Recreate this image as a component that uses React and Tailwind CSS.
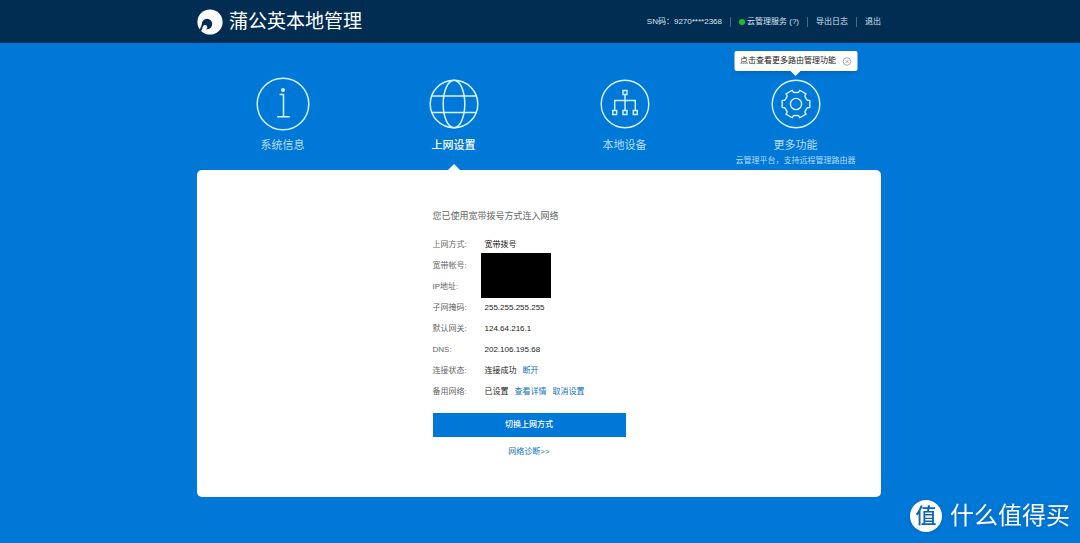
import React, { useState } from 'react';

const InfoIcon = () => (
    <svg className="w-[54px] h-[54px]" viewBox="0 0 54 54" fill="none" stroke="currentColor" strokeWidth="1.5">
        <circle cx="27" cy="27" r="25.8" />
        <circle cx="27" cy="13" r="2" fill="currentColor" stroke="none" />
        <path d="M23.5 17.5h4v22.3M21.2 39.8h12.6" />
    </svg>
);

const GlobeIcon = () => (
    <svg className="w-[50px] h-[50px]" viewBox="0 0 50 50" fill="none" stroke="currentColor" strokeWidth="1.5">
        <circle cx="25" cy="25" r="23.8" />
        <ellipse cx="25" cy="25" rx="10.8" ry="23.8" />
        <path d="M2.6 17h44.8M2.6 33.5h44.8" />
    </svg>
);

const DevicesIcon = () => (
    <svg className="w-[50px] h-[50px]" viewBox="0 0 50 50" fill="none" stroke="currentColor" strokeWidth="1.4">
        <circle cx="25" cy="25" r="23.8" />
        <path d="M23 11.5h4v4h-4zM12.7 31.5h4v4h-4zM23 31.5h4v4h-4zM33.3 31.5h4v4h-4z" />
        <path d="M25 15.5v16M14.7 31.5v-10h20.6v10" />
    </svg>
);

// Seis dientes repartidos cada 60 grados
const gearPoints = [0, 60, 120, 180, 240, 300]
    .flatMap(deg => {
        const a = (deg * Math.PI) / 180;
        return [[10.6, -4.6], [11.4, -3.6], [13.8, -3.6], [13.8, 3.6], [11.4, 3.6], [10.6, 4.6]].map(
            ([x, y]) => `${(25 + x * Math.cos(a) - y * Math.sin(a)).toFixed(2)},${(25 + x * Math.sin(a) + y * Math.cos(a)).toFixed(2)}`
        );
    })
    .join(' ');

const GearIcon = () => (
    <svg className="w-[50px] h-[50px]" viewBox="0 0 50 50" fill="none" stroke="currentColor" strokeWidth="1.4" strokeLinejoin="round">
        <circle cx="25" cy="25" r="23.8" />
        <circle cx="25" cy="25" r="5.6" />
        <polygon points={gearPoints} />
    </svg>
);

const Logo = () => (
    <svg className="w-[26px] h-[26px]" viewBox="0 0 26 26">
        <circle cx="13" cy="13" r="12.6" fill="#fff" />
        <circle cx="10" cy="15" r="5.2" fill="#022d53" />
        <path d="M5.8 15.5C5 18 4.4 19.5 3 22" fill="none" stroke="#022d53" strokeWidth="2" />
        <circle cx="8" cy="18.2" r="2.2" fill="#fff" />
    </svg>
);

const TABS = [
    { id: 'info', label: '系统信息', icon: <InfoIcon /> },
    { id: 'network', label: '上网设置', icon: <GlobeIcon /> },
    { id: 'devices', label: '本地设备', icon: <DevicesIcon /> },
    { id: 'more', label: '更多功能', icon: <GearIcon />, note: '云管理平台，支持远程管理路由器' },
];

const linkClass = 'text-[#0f70bd] hover:underline';

const Header = () => (
    <header className="bg-[#022d53] pr-0.5">
        <div className="max-w-[684px] h-[43px] mx-auto flex items-center justify-between">
            <div className="flex items-center gap-1.5 text-white">
                <Logo />
                <h1 className="text-[19px] leading-6 whitespace-nowrap">蒲公英本地管理</h1>
            </div>
            <nav className="flex items-center text-[8px] leading-[10px] text-[#d3e2ee] whitespace-nowrap divide-x divide-[#4a6a86]">
                <span className="pr-2">SN码：9270****2368</span>
                <a href="#cloud" className="flex items-center gap-0.5 px-2">
                    <span className="w-1.5 h-1.5 rounded-full bg-[#16c02c]"></span>
                    云管理服务 (?)
                </a>
                <a href="#log" className="px-2">导出日志</a>
                <a href="#logout" className="pl-2">退出</a>
            </nav>
        </div>
    </header>
);

const Tooltip = ({ onClose }) => (
    <div className="absolute z-10 top-[8px] left-1/2 -translate-x-1/2 h-5 px-1.5 flex items-center gap-1.5 bg-white rounded-xs shadow-md text-[8px] text-[#222] whitespace-nowrap">
        点击查看更多路由管理功能
        <button type="button" aria-label="关闭" onClick={onClose} className="text-[#aaa]">
            <svg className="w-[9px] h-[9px]" viewBox="0 0 9 9" fill="none" stroke="currentColor">
                <circle cx="4.5" cy="4.5" r="3.8" />
                <path d="M3 3l3 3M6 3L3 6" />
            </svg>
        </button>
        <span className="absolute top-full left-1/2 -translate-x-1/2 border-x-[5px] border-t-[5px] border-x-transparent border-t-white"></span>
    </div>
);

const App = () => {
    const [active, setActive] = useState('network');
    const [showTip, setShowTip] = useState(true);

    return (
        <div className="min-h-screen bg-[#0078d8] font-['Liberation_Sans','Noto_Sans_CJK_SC',sans-serif]">
            <Header />

            <main className="pr-0.5 pb-11">
                <div className="max-w-[684px] mx-auto">
                    <div className="grid grid-cols-4 h-[127px]">
                        {TABS.map(tab => (
                            <div key={tab.id} className="relative">
                                {tab.id === 'more' && showTip && <Tooltip onClose={() => setShowTip(false)} />}
                                <button
                                    type="button"
                                    onClick={() => setActive(tab.id)}
                                    className={`w-full h-full pt-[34px] flex flex-col items-center ${active === tab.id ? 'text-white' : 'text-[#b5dcf8]'}`}
                                >
                                    <span className="h-[54px] flex items-center text-[#d8f4ff]">{tab.icon}</span>
                                    <span className={`mt-1.5 text-[11px] leading-[17px] ${active === tab.id ? 'font-medium' : ''}`}>{tab.label}</span>
                                    {tab.note && <span className="text-[8px] leading-[14px] whitespace-nowrap">{tab.note}</span>}
                                </button>
                                {active === tab.id && (
                                    <span className="absolute bottom-0 left-1/2 -translate-x-1/2 border-x-[6px] border-b-[6px] border-x-transparent border-b-white"></span>
                                )}
                            </div>
                        ))}
                    </div>

                    <section className="bg-white rounded-[5px] min-h-[327px] pt-[38px] pb-8 pr-5">
                        <div className="w-[193px] mx-auto text-[8px] text-[#222]">
                            <h2 className="text-[9px] leading-4 text-[#666] whitespace-nowrap">您已使用宽带拨号方式连入网络</h2>

                            <dl className="mt-2.5 grid grid-cols-[52px_1fr] auto-rows-[21px] leading-[21px] whitespace-nowrap [&>dt]:text-[#666]">
                                <dt>上网方式:</dt>
                                <dd>宽带拨号</dd>
                                <dt>宽带帐号:</dt>
                                <dd className="row-span-2 w-[70px] -ml-1 -mt-0.5 -mb-px bg-black"></dd>
                                <dt>IP地址:</dt>
                                <dt>子网掩码:</dt>
                                <dd>255.255.255.255</dd>
                                <dt>默认网关:</dt>
                                <dd>124.64.216.1</dd>
                                <dt>DNS:</dt>
                                <dd>202.106.195.68</dd>
                                <dt>连接状态:</dt>
                                <dd className="flex gap-1.5">
                                    连接成功
                                    <a href="#disconnect" className={linkClass}>断开</a>
                                </dd>
                                <dt>备用网络:</dt>
                                <dd className="flex gap-1.5">
                                    已设置
                                    <a href="#detail" className={linkClass}>查看详情</a>
                                    <a href="#cancel" className={linkClass}>取消设置</a>
                                </dd>
                            </dl>

                            <button type="button" className="mt-[11px] w-full h-6 bg-[#0078d8] text-white font-medium">切换上网方式</button>
                            <p className="mt-[7px] text-center leading-4">
                                <a href="#diagnose" className={linkClass}>网络诊断&gt;&gt;</a>
                            </p>
                        </div>
                    </section>
                </div>
            </main>

            {/* Marca fija en la esquina */}
            <div className="fixed right-2.5 bottom-[11px] flex items-center gap-2 text-white drop-shadow-sm">
                <span className="w-8 h-8 rounded-full bg-white text-[#0b64b0] text-[21px] leading-8 font-medium text-center">值</span>
                <span className="text-[24px] leading-8 whitespace-nowrap">什么值得买</span>
            </div>
        </div>
    );
};

export default App;
